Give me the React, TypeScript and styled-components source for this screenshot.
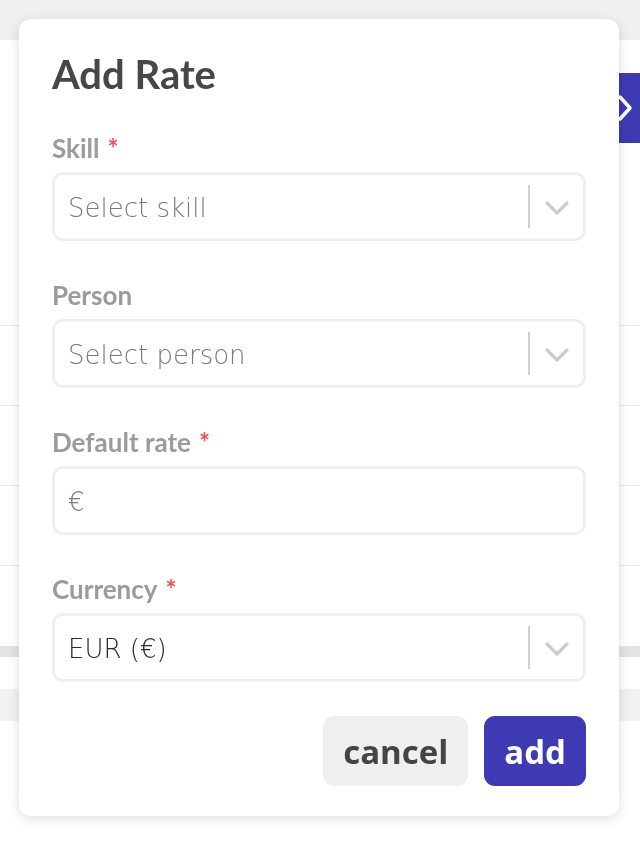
import React from "react";
import styled, { createGlobalStyle } from "styled-components";

const GlobalStyle = createGlobalStyle`
  html, body { margin: 0; padding: 0; background: #ffffff; }
  body { font-family: "Lato", "Liberation Sans", sans-serif; }
  * { box-sizing: border-box; }
`;

const Page = styled.div`
  width: 640px;
  height: 842px;
  overflow: hidden;
  display: flex;
  flex-direction: column;
  background: #ffffff;
`;

const TopBar = styled.div`
  height: 40px;
  background: #efefef;
  flex: none;
`;

const HeaderRow = styled.div`
  height: 286px;
  flex: none;
  display: flex;
  justify-content: flex-end;
  align-items: flex-start;
  padding-top: 33px;
  border-bottom: 1px solid #e6e6e6;
`;

const SideButton = styled.button`
  width: 60px;
  height: 70px;
  border: none;
  border-radius: 8px 0 0 8px;
  background: #3e3ab3;
  display: flex;
  align-items: center;
  justify-content: flex-end;
  padding: 0 6px 0 0;
`;

const TableRow = styled.div`
  height: 80px;
  flex: none;
  border-bottom: 1px solid #e6e6e6;
`;

const Band = styled.div<{ $h: number; $bg: string; $mt: number }>`
  flex: none;
  height: ${(p) => p.$h}px;
  margin-top: ${(p) => p.$mt}px;
  background: ${(p) => p.$bg};
`;

const Modal = styled.div`
  position: fixed;
  top: 19px;
  left: 19px;
  width: 600px;
  background: #ffffff;
  border-radius: 12px;
  box-shadow: 0 3px 12px rgba(0, 0, 0, 0.13);
  padding: 35px 33px 30px;
  display: flex;
  flex-direction: column;
`;

const Title = styled.h2`
  flex: none;
  margin: 0 0 40px;
  height: 40px;
  line-height: 40px;
  font-family: "Lato", sans-serif;
  font-weight: 700;
  font-size: 40px;
  color: #474747;
`;

const Form = styled.div`
  display: flex;
  flex-direction: column;
  gap: 40px;
`;

const Group = styled.div`
  display: flex;
  flex-direction: column;
  gap: 10px;
`;

const Label = styled.label`
  flex: none;
  height: 28px;
  line-height: 28px;
  font-family: "Lato", sans-serif;
  font-weight: 700;
  font-size: 26px;
  color: #9b9b9b;
`;

const Req = styled.span`
  color: #ee4f58;
  margin-left: 8px;
`;

const Control = styled.div`
  flex: none;
  height: 69px;
  border: 3px solid #efefef;
  border-radius: 11px;
  display: flex;
  align-items: center;
  background: #fff;
`;

const Value = styled.div<{ $placeholder?: boolean }>`
  flex: 1;
  padding-left: 13px;
  padding-top: 3px;
  font-family: "DejaVu Sans", sans-serif;
  font-weight: 200;
  font-size: 26px;
  color: ${(p) => (p.$placeholder ? "#7a7a7a" : "#2a2a2a")};
  white-space: nowrap;
`;

const Indicators = styled.div`
  display: flex;
  align-items: center;
  height: 100%;
`;

const Separator = styled.span`
  width: 2px;
  height: 43px;
  background: #d0d0d0;
`;

const ChevronBox = styled.span`
  width: 53px;
  display: flex;
  align-items: center;
  justify-content: center;
  padding-top: 2px;
`;

const Actions = styled.div`
  flex: none;
  margin-top: 34px;
  display: flex;
  justify-content: flex-end;
  gap: 16px;
`;

const Btn = styled.button<{ $primary?: boolean }>`
  height: 70px;
  padding: 0 20px;
  border: none;
  border-radius: 11px;
  font-family: "Open Sans", sans-serif;
  font-weight: 700;
  font-size: 33px;
  background: ${(p) => (p.$primary ? "#3e3ab3" : "#efefef")};
  color: ${(p) => (p.$primary ? "#ffffff" : "#444444")};
`;

const Chevron = () => (
  <svg width="26" height="16" viewBox="0 0 26 16" fill="none">
    <path d="M3 3l10 10 10-10" stroke="#cccccc" strokeWidth="3.2" strokeLinecap="round" strokeLinejoin="round" />
  </svg>
);

const RightChevron = () => (
  <svg width="18" height="30" viewBox="0 0 18 30" fill="none">
    <path d="M4 4l10 11-10 11" stroke="#ffffff" strokeWidth="3.5" strokeLinecap="round" strokeLinejoin="round" />
  </svg>
);

type SelectProps = { value: string; placeholder?: boolean };
const Select = ({ value, placeholder }: SelectProps) => (
  <Control>
    <Value $placeholder={placeholder}>{value}</Value>
    <Indicators>
      <Separator />
      <ChevronBox>
        <Chevron />
      </ChevronBox>
    </Indicators>
  </Control>
);

export default function App() {
  return (
    <>
      <GlobalStyle />
      <Page>
        <TopBar />
        <HeaderRow>
          <SideButton aria-label="next">
            <RightChevron />
          </SideButton>
        </HeaderRow>
        <TableRow />
        <TableRow />
        <TableRow />
        <Band $mt={80} $h={11} $bg="#e3e3e3" />
        <Band $mt={32} $h={32} $bg="#f1f1f1" />
      </Page>
      <Modal role="dialog">
        <Title>Add Rate</Title>
        <Form>
          <Group>
            <Label>
              Skill<Req>*</Req>
            </Label>
            <Select value="Select skill" placeholder />
          </Group>
          <Group>
            <Label>Person</Label>
            <Select value="Select person" placeholder />
          </Group>
          <Group>
            <Label>
              Default rate<Req>*</Req>
            </Label>
            <Control>
              <Value $placeholder>€</Value>
            </Control>
          </Group>
          <Group>
            <Label>
              Currency<Req>*</Req>
            </Label>
            <Select value="EUR (€)" />
          </Group>
        </Form>
        <Actions>
          <Btn>cancel</Btn>
          <Btn $primary>add</Btn>
        </Actions>
      </Modal>
    </>
  );
}
